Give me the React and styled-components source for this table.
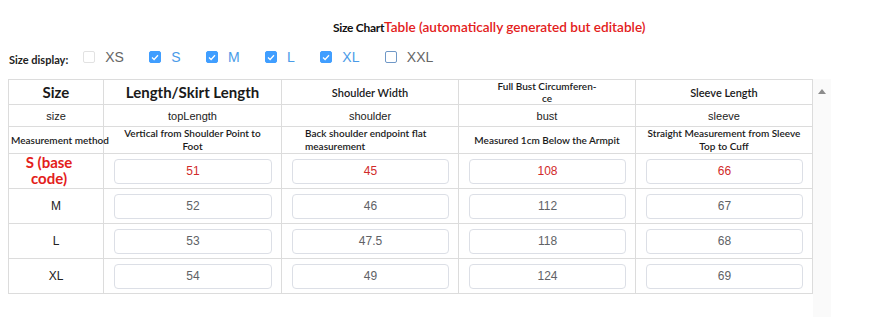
import React from 'react';
import styled, { createGlobalStyle } from 'styled-components';

const Global = createGlobalStyle`
  body {
    margin: 0;
    background: #fff;
    font-family: "Liberation Sans", Arial, sans-serif;
  }
`;

const sizes = [
  { name: 'XS', checked: false, faint: true },
  { name: 'S', checked: true },
  { name: 'M', checked: true },
  { name: 'L', checked: true },
  { name: 'XL', checked: true },
  { name: 'XXL', checked: false },
];

const columns = [
  { title: 'Length/Skirt Length', big: true, key: 'topLength', method: 'Vertical from Shoulder Point to Foot' },
  { title: 'Shoulder Width', key: 'shoulder', method: 'Back shoulder endpoint flat measurement', left: true },
  { title: 'Full Bust Circumferen-\nce', small: true, key: 'bust', method: 'Measured 1cm Below the Armpit' },
  { title: 'Sleeve Length', key: 'sleeve', method: 'Straight Measurement from Sleeve Top to Cuff' },
];

const rows = [
  { size: 'S (base code)', base: true, values: ['51', '45', '108', '66'] },
  { size: 'M', values: ['52', '46', '112', '67'] },
  { size: 'L', values: ['53', '47.5', '118', '68'] },
  { size: 'XL', values: ['54', '49', '124', '69'] },
];

const App = () => {
  return (
    <Page>
      <Global />
      <Title>
        <TitleBlack>Size Chart</TitleBlack>
        <TitleRed>Table (automatically generated but editable)</TitleRed>
      </Title>
      <Toolbar>
        <ToolbarLabel>Size display:</ToolbarLabel>
        {sizes.map((s) => (
          <Option key={s.name} checked={s.checked}>
            <Box checked={s.checked} faint={s.faint}>
              {s.checked && (
                <svg width="8" height="7" viewBox="0 0 8 7">
                  <path d="M1 3.6 L3.1 5.5 L7 1.3" fill="none" stroke="#fff" strokeWidth="1.3" />
                </svg>
              )}
            </Box>
            <span>{s.name}</span>
          </Option>
        ))}
      </Toolbar>
      <TableArea>
        <Table>
          <colgroup>
            <col style={{ width: 95 }} />
            <col style={{ width: 178 }} />
            <col style={{ width: 177 }} />
            <col style={{ width: 177 }} />
            <col style={{ width: 177 }} />
          </colgroup>
          <tbody>
            <HeadRow>
              <HeadCell big>Size</HeadCell>
              {columns.map((c) => (
                <HeadCell key={c.key} big={c.big} small={c.small}>
                  {c.title}
                </HeadCell>
              ))}
            </HeadRow>
            <KeyRow>
              <KeyCell>size</KeyCell>
              {columns.map((c) => (
                <KeyCell key={c.key}>{c.key}</KeyCell>
              ))}
            </KeyRow>
            <MethodRow>
              <MethodCell nowrap>Measurement method</MethodCell>
              {columns.map((c) => (
                <MethodCell key={c.key} left={c.left}>
                  {c.method}
                </MethodCell>
              ))}
            </MethodRow>
            {rows.map((r) => (
              <DataRow key={r.size}>
                <SizeCell base={r.base}>
                  {r.base ? <BaseLabel>S (base<br />code)</BaseLabel> : r.size}
                </SizeCell>
                {r.values.map((v, i) => (
                  <ValueCell key={i}>
                    <ValueInput base={r.base} defaultValue={v} />
                  </ValueCell>
                ))}
              </DataRow>
            ))}
          </tbody>
        </Table>
        <ScrollTrack>
          <ScrollArrow />
        </ScrollTrack>
      </TableArea>
    </Page>
  );
};

const Page = styled.div`
  width: 880px;
  height: 317px;
  overflow: hidden;
  padding: 0 0 0 8px;
  box-sizing: border-box;
`;

const Title = styled.div`
  display: flex;
  align-items: baseline;
  padding: 19px 0 0 325px;
  height: 19px;
  font-family: Lato, sans-serif;
`;

const TitleBlack = styled.span`
  font-size: 12px;
  font-weight: 700;
  color: #111;
  letter-spacing: -0.3px;
`;

const TitleRed = styled.span`
  font-size: 13.6px;
  font-weight: 600;
  color: #e3201b;
`;

const Toolbar = styled.div`
  display: flex;
  align-items: center;
  height: 41px;
  padding-left: 1px;
  padding-bottom: 3px;
  box-sizing: border-box;
`;

const ToolbarLabel = styled.span`
  font-family: Lato, sans-serif;
  font-size: 11px;
  font-weight: 700;
  color: #222;
  margin-top: 4px;
  margin-right: 15px;
`;

const Option = styled.label`
  display: flex;
  align-items: center;
  gap: 10px;
  margin-right: 25.4px;
  font-size: 14px;
  color: ${(p) => (p.checked ? '#4a9be8' : '#666')};
`;

const Box = styled.span`
  width: 12px;
  height: 12px;
  box-sizing: border-box;
  border-radius: 2px;
  display: flex;
  align-items: center;
  justify-content: center;
  background: ${(p) => (p.checked ? '#409eff' : '#fff')};
  border: 1px solid ${(p) => (p.checked ? '#409eff' : p.faint ? '#e2e2e2' : '#6f98c7')};
`;

const TableArea = styled.div`
  display: flex;
  align-items: flex-start;
`;

const Table = styled.table`
  width: 804px;
  table-layout: fixed;
  border-collapse: collapse;
  border: 1px solid #dcdcdc;
  td {
    border: 1px solid #dcdcdc;
    padding: 0;
    text-align: center;
    vertical-align: middle;
  }
`;

const HeadRow = styled.tr`
  height: 25px;
`;

const HeadCell = styled.td`
  font-family: Lato, sans-serif;
  font-size: ${(p) => (p.big ? '15px' : p.small ? '10px' : '11px')};
  font-weight: ${(p) => (p.big ? 700 : 600)};
  color: #1a1a1a;
  line-height: ${(p) => (p.small ? '12px' : 'normal')};
  white-space: pre-line;
`;

const KeyRow = styled.tr`
  height: 22px;
`;

const KeyCell = styled.td`
  font-size: 11px;
  color: #222;
`;

const MethodRow = styled.tr`
  height: 26px;
`;

const MethodCell = styled.td`
  font-family: Lato, sans-serif;
  font-size: 10px;
  font-weight: 600;
  color: #1a1a1a;
  line-height: 13px;
  white-space: ${(p) => (p.nowrap ? 'nowrap' : 'normal')};
  text-align: ${(p) => (p.left ? 'left' : 'center')} !important;
  padding: ${(p) => (p.left ? '0 4px 0 23px' : p.nowrap ? '0 0 0 2px' : '0 10px')} !important;
  overflow: visible;
`;

const DataRow = styled.tr`
  height: 35px;
`;

const SizeCell = styled.td`
  font-size: 12px;
  color: #222;
`;

const BaseLabel = styled.div`
  font-family: Lato, sans-serif;
  font-size: 15px;
  font-weight: 700;
  color: #e3201b;
  line-height: 16px;
  text-align: center;
  width: 60px;
  margin: -3px 0 0 10px;
`;

const ValueCell = styled.td`
  padding: 0 9px 0 10px !important;
`;

const ValueInput = styled.input`
  display: block;
  width: 100%;
  height: 25px;
  box-sizing: border-box;
  border: 1px solid #dcdfe6;
  border-radius: 4px;
  background: #fff;
  text-align: center;
  font-family: "Liberation Sans", Arial, sans-serif;
  font-size: 12px;
  color: ${(p) => (p.base ? '#d12a2a' : '#606266')};
  outline: none;
`;

const ScrollTrack = styled.div`
  width: 18px;
  height: 240px;
  background: #fafafa;
  display: flex;
  justify-content: center;
  padding-top: 10px;
  box-sizing: border-box;
`;

const ScrollArrow = styled.div`
  width: 0;
  height: 0;
  border-left: 4px solid transparent;
  border-right: 4px solid transparent;
  border-bottom: 5px solid #8c8c8c;
`;

export default App;
